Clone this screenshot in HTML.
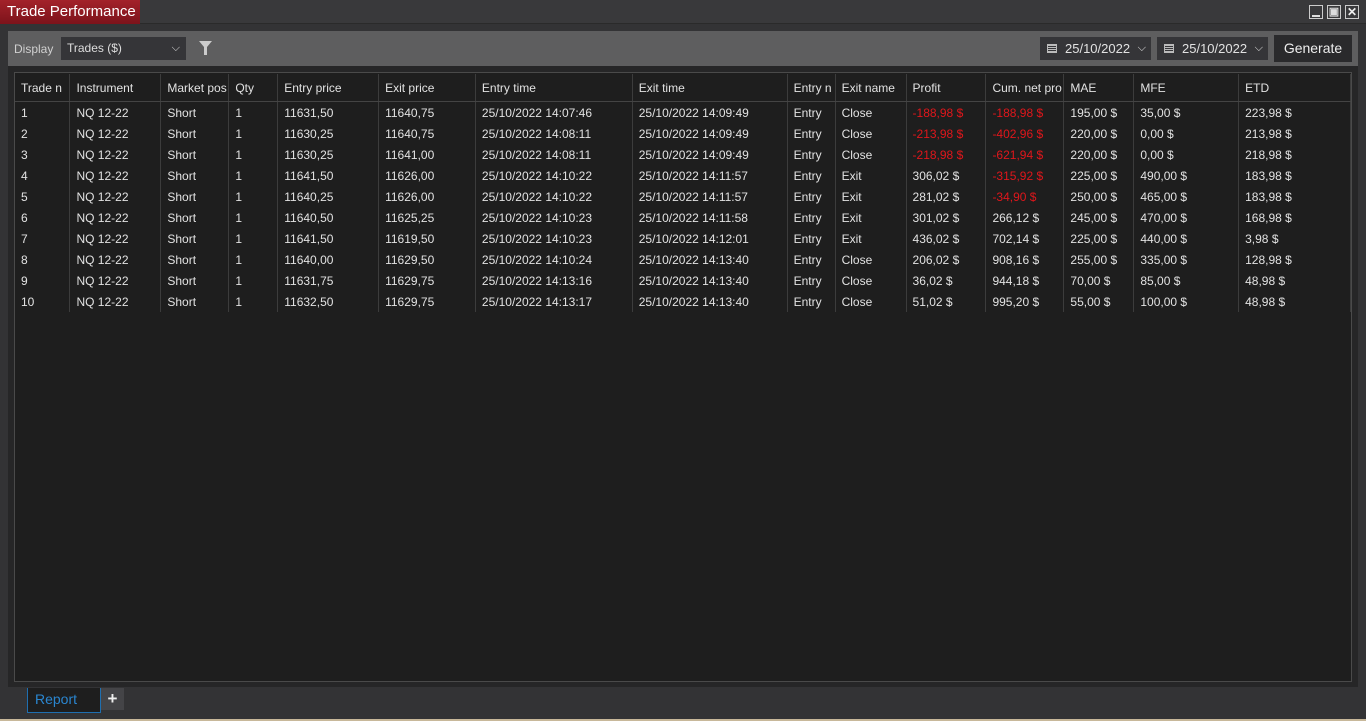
<!DOCTYPE html><html><head><style>
body{margin:0;width:1366px;height:721px;background:#333335;font-family:"Liberation Sans",sans-serif;font-size:12px;color:#e2e2e2;position:relative;overflow:hidden}
.a{position:absolute}
table{border-collapse:collapse;table-layout:fixed}
td,th{padding:0 0 0 6px;white-space:nowrap;overflow:hidden;text-align:left;font-weight:normal;border-right:1px solid #3c3c3c}
th{height:27px;border-bottom:1px solid #444}
td{height:21px}
.r{color:#e0161b}
.cal{position:absolute;left:7px;top:7px;width:10px;height:9px;border:1px solid #bbb;box-sizing:border-box;background:repeating-linear-gradient(#bbb 0 1px,transparent 1px 2px)}
</style></head><body>
<div class="a" style="left:0;top:0;width:1366px;height:23px;background:#39393b;border-bottom:1px solid #2a2a2a"></div>
<div class="a" style="left:0;top:0;width:140px;height:24px;background:linear-gradient(#a3222a,#7d131b);color:#fff;font-size:15px;line-height:24px;padding-left:7px;box-sizing:border-box">Trade Performance</div>
<div class="a" style="left:1309px;top:5px;width:14px;height:14px;border:1px solid #ccc;box-sizing:border-box"><div class="a" style="left:2px;top:9px;width:8px;height:2px;background:#ddd"></div></div>
<div class="a" style="left:1327px;top:5px;width:14px;height:14px;border:1px solid #ccc;box-sizing:border-box;color:#ddd;font-size:11px;line-height:12px;text-align:center;font-weight:bold">▣</div>
<div class="a" style="left:1345px;top:5px;width:14px;height:14px;border:1px solid #ccc;box-sizing:border-box;color:#eee;font-size:12px;line-height:12px;text-align:center;font-weight:bold">✕</div>
<div class="a" style="left:8px;top:31px;width:1350px;height:656px;background:#262627"></div>
<div class="a" style="left:8px;top:31px;width:1350px;height:35px;background:#5e5e5f"></div>
<div class="a" style="left:14px;top:42px;color:#d0d0d0">Display</div>
<div class="a" style="left:61px;top:37px;width:125px;height:23px;background:#353538;color:#ddd;line-height:23px;padding-left:6px;box-sizing:border-box">Trades ($)<span class="a" style="right:6px;top:0;font-size:11px">⌵</span></div>
<svg class="a" style="left:199px;top:41px" width="13" height="14"><path d="M0 0H13L8 6V14H5V6Z" fill="#ccc"/></svg>
<div class="a" style="left:1040px;top:37px;width:111px;height:23px;background:#353538;line-height:23px;padding-left:25px;box-sizing:border-box;font-size:13px">25/10/2022<span class="cal"></span><span class="a" style="right:5px;top:0;font-size:11px">⌵</span></div>
<div class="a" style="left:1157px;top:37px;width:111px;height:23px;background:#353538;line-height:23px;padding-left:25px;box-sizing:border-box;font-size:13px">25/10/2022<span class="cal"></span><span class="a" style="right:5px;top:0;font-size:11px">⌵</span></div>
<div class="a" style="left:1274px;top:35px;width:78px;height:27px;background:#2a2a2c;line-height:27px;text-align:center;font-size:14px;color:#eee">Generate</div>
<div class="a" style="left:14px;top:72px;width:1338px;height:610px;background:#1e1e1e;border:1px solid #4a4a4a;box-sizing:border-box">
<table style="position:absolute;left:0;top:1px">
<colgroup><col style="width:55px"><col style="width:91px"><col style="width:68px"><col style="width:49px"><col style="width:101px"><col style="width:97px"><col style="width:157px"><col style="width:155px"><col style="width:48px"><col style="width:71px"><col style="width:80px"><col style="width:78px"><col style="width:70px"><col style="width:105px"><col style="width:112px"></colgroup>
<tr><th>Trade n</th><th>Instrument</th><th>Market pos</th><th>Qty</th><th>Entry price</th><th>Exit price</th><th>Entry time</th><th>Exit time</th><th>Entry n</th><th>Exit name</th><th>Profit</th><th>Cum. net pro</th><th>MAE</th><th>MFE</th><th>ETD</th></tr>
<tr><td>1</td><td>NQ 12-22</td><td>Short</td><td>1</td><td>11631,50</td><td>11640,75</td><td>25/10/2022 14:07:46</td><td>25/10/2022 14:09:49</td><td>Entry</td><td>Close</td><td class="r">-188,98 $</td><td class="r">-188,98 $</td><td>195,00 $</td><td>35,00 $</td><td>223,98 $</td></tr>
<tr><td>2</td><td>NQ 12-22</td><td>Short</td><td>1</td><td>11630,25</td><td>11640,75</td><td>25/10/2022 14:08:11</td><td>25/10/2022 14:09:49</td><td>Entry</td><td>Close</td><td class="r">-213,98 $</td><td class="r">-402,96 $</td><td>220,00 $</td><td>0,00 $</td><td>213,98 $</td></tr>
<tr><td>3</td><td>NQ 12-22</td><td>Short</td><td>1</td><td>11630,25</td><td>11641,00</td><td>25/10/2022 14:08:11</td><td>25/10/2022 14:09:49</td><td>Entry</td><td>Close</td><td class="r">-218,98 $</td><td class="r">-621,94 $</td><td>220,00 $</td><td>0,00 $</td><td>218,98 $</td></tr>
<tr><td>4</td><td>NQ 12-22</td><td>Short</td><td>1</td><td>11641,50</td><td>11626,00</td><td>25/10/2022 14:10:22</td><td>25/10/2022 14:11:57</td><td>Entry</td><td>Exit</td><td>306,02 $</td><td class="r">-315,92 $</td><td>225,00 $</td><td>490,00 $</td><td>183,98 $</td></tr>
<tr><td>5</td><td>NQ 12-22</td><td>Short</td><td>1</td><td>11640,25</td><td>11626,00</td><td>25/10/2022 14:10:22</td><td>25/10/2022 14:11:57</td><td>Entry</td><td>Exit</td><td>281,02 $</td><td class="r">-34,90 $</td><td>250,00 $</td><td>465,00 $</td><td>183,98 $</td></tr>
<tr><td>6</td><td>NQ 12-22</td><td>Short</td><td>1</td><td>11640,50</td><td>11625,25</td><td>25/10/2022 14:10:23</td><td>25/10/2022 14:11:58</td><td>Entry</td><td>Exit</td><td>301,02 $</td><td>266,12 $</td><td>245,00 $</td><td>470,00 $</td><td>168,98 $</td></tr>
<tr><td>7</td><td>NQ 12-22</td><td>Short</td><td>1</td><td>11641,50</td><td>11619,50</td><td>25/10/2022 14:10:23</td><td>25/10/2022 14:12:01</td><td>Entry</td><td>Exit</td><td>436,02 $</td><td>702,14 $</td><td>225,00 $</td><td>440,00 $</td><td>3,98 $</td></tr>
<tr><td>8</td><td>NQ 12-22</td><td>Short</td><td>1</td><td>11640,00</td><td>11629,50</td><td>25/10/2022 14:10:24</td><td>25/10/2022 14:13:40</td><td>Entry</td><td>Close</td><td>206,02 $</td><td>908,16 $</td><td>255,00 $</td><td>335,00 $</td><td>128,98 $</td></tr>
<tr><td>9</td><td>NQ 12-22</td><td>Short</td><td>1</td><td>11631,75</td><td>11629,75</td><td>25/10/2022 14:13:16</td><td>25/10/2022 14:13:40</td><td>Entry</td><td>Close</td><td>36,02 $</td><td>944,18 $</td><td>70,00 $</td><td>85,00 $</td><td>48,98 $</td></tr>
<tr><td>10</td><td>NQ 12-22</td><td>Short</td><td>1</td><td>11632,50</td><td>11629,75</td><td>25/10/2022 14:13:17</td><td>25/10/2022 14:13:40</td><td>Entry</td><td>Close</td><td>51,02 $</td><td>995,20 $</td><td>55,00 $</td><td>100,00 $</td><td>48,98 $</td></tr>
</table></div>
<div class="a" style="left:27px;top:688px;width:74px;height:25px;background:#1e1e1e;border:1px solid #1f6fb0;border-top:none;box-sizing:border-box;color:#2a86d0;font-size:14px;line-height:23px;padding-left:7px">Report</div>
<div class="a" style="left:101px;top:688px;width:23px;height:22px;background:#444447;color:#eee;font-size:17px;font-weight:bold;line-height:22px;text-align:center">+</div>
<div class="a" style="left:0;top:719px;width:1366px;height:2px;background:#c8b89a"></div>
</body></html>
